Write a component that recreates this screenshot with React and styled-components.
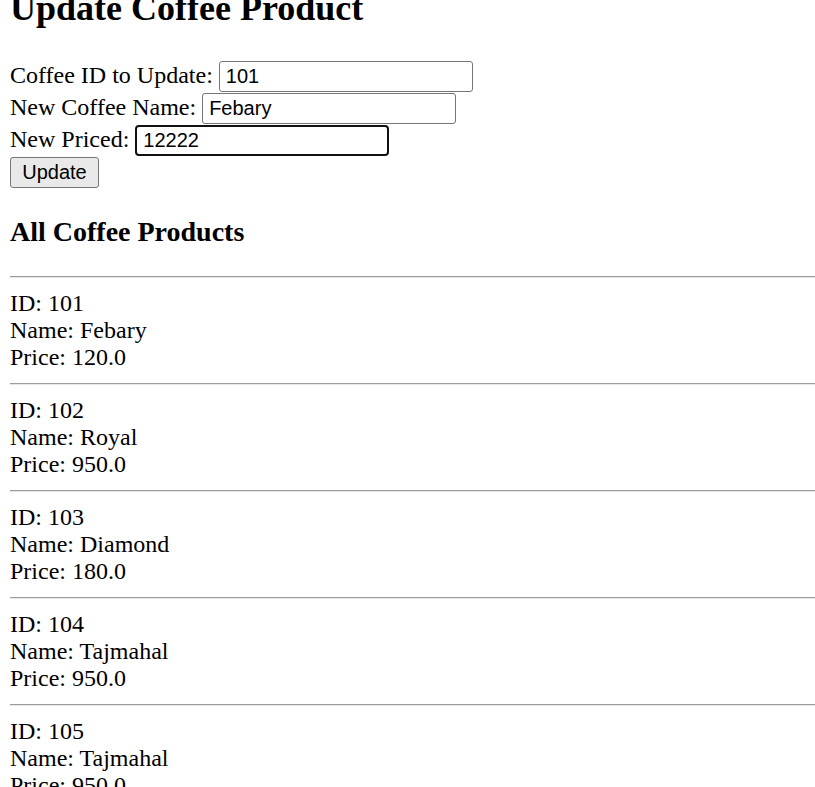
import React, { useState } from 'react';
import styled, { createGlobalStyle } from 'styled-components';

const GlobalStyle = createGlobalStyle`
  html, body { margin: 0; overflow: hidden; background: #fff; }
  body {
    padding-left: 10px;
    font-family: 'Liberation Serif', 'Times New Roman', serif;
    font-size: 24px;
    line-height: 27px;
    color: #000;
  }
`;

const Title = styled.h1`font-size:36px; line-height:41px; font-weight:bold; margin:-12px 0 31px;`;
const Form = styled.form`display:flex; flex-direction:column;`;
const Row = styled.div`display:flex; align-items:center; gap:6px; height:32px;`;
const Label = styled.label`white-space:nowrap; margin-top:-1px;`;
const Input = styled.input`
  box-sizing:border-box;
  width:254px;
  height:31px;
  padding:0 6px;
  font-family:'Liberation Sans', Arial, sans-serif;
  font-size:20px;
  color:#000;
  background:#fff;
  border:${({ $focused }) => $focused ? '2px solid #111' : '1px solid #767676'};
  border-radius:${({ $focused }) => $focused ? '4px' : '3px'};
  outline:none;
`;
const Button = styled.button`
  box-sizing:border-box;
  width:89px;
  height:31px;
  padding:0;
  font-family:'Liberation Sans', Arial, sans-serif;
  font-size:20px;
  color:#000;
  background:#e9e9e9;
  border:1px solid #767676;
  border-radius:3px;
`;
const SubTitle = styled.h3`font-size:28px; line-height:32px; font-weight:bold; margin:28px 0;`;
const Rule = styled.hr`height:0; margin:12px 0; border:none; border-top:1px solid #9c9c9c; border-bottom:1px solid #e6e6e6;`;
const Item = styled.div`line-height:27px;`;

const products = [
  { id: 101, name: 'Febary', price: '120.0' },
  { id: 102, name: 'Royal', price: '950.0' },
  { id: 103, name: 'Diamond', price: '180.0' },
  { id: 104, name: 'Tajmahal', price: '950.0' },
  { id: 105, name: 'Tajmahal', price: '950.0' },
];

export default function App() {
  const [id, setId] = useState('101');
  const [name, setName] = useState('Febary');
  const [price, setPrice] = useState('12222');

  return (
    <div>
      <GlobalStyle />
      <Title>Update Coffee Product</Title>
      <Form onSubmit={(e) => e.preventDefault()}>
        <Row>
          <Label>Coffee ID to Update:</Label>
          <Input value={id} onChange={(e) => setId(e.target.value)} />
        </Row>
        <Row>
          <Label>New Coffee Name:</Label>
          <Input value={name} onChange={(e) => setName(e.target.value)} />
        </Row>
        <Row>
          <Label>New Priced:</Label>
          <Input $focused value={price} onChange={(e) => setPrice(e.target.value)} />
        </Row>
        <Row>
          <Button type="submit">Update</Button>
        </Row>
      </Form>
      <SubTitle>All Coffee Products</SubTitle>
      {products.map((p) => (
        <div key={p.id}>
          <Rule />
          <Item>
            <div>ID: {p.id}</div>
            <div>Name: {p.name}</div>
            <div>Price: {p.price}</div>
          </Item>
        </div>
      ))}
    </div>
  );
}
